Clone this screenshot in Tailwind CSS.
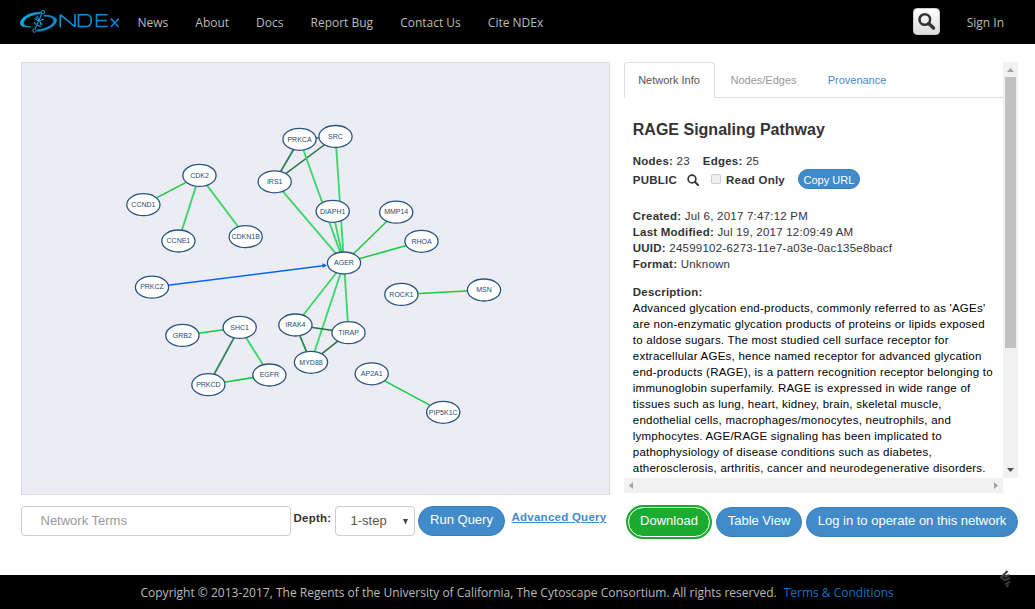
<!DOCTYPE html>
<html lang="en">
<head>
<meta charset="utf-8">
<title>NDEx - RAGE Signaling Pathway</title>
<script src="https://cdn.jsdelivr.net/npm/@tailwindcss/browser@4"></script>
</head>
<body class="bg-white text-[#333] text-xs leading-4 font-['Liberation_Sans',sans-serif] w-[1035px] h-[609px] overflow-hidden flex flex-col">
<header class="h-11 shrink-0 bg-black flex items-center pl-5 pr-[31px] text-[#bbb] font-['Open_Sans',sans-serif]">
  <svg class="w-[100px] h-7 mr-[17.5px] shrink-0" viewBox="20 8 100 28" fill="none">
    <defs><linearGradient id="lg" x1="20" y1="0" x2="120" y2="0" gradientUnits="userSpaceOnUse"><stop offset="0" stop-color="#12a5e0"/><stop offset="1" stop-color="#0a7fd0"/></linearGradient></defs>
    <g stroke="url(#lg)">
      <path d="M40.500 12.200C29 12.200 20.300 18 20.300 23.200C20.300 26.200 24 27.300 31 27C26 26.500 23.400 25.300 23.500 23C23.700 18.500 31 14.500 40.500 13.500Z" fill="#12a5e0" stroke-width=".7"/>
      <path d="M44 15.200C51 15.200 56.500 17.200 56.500 20.300C56.500 25.300 47.500 30.800 37.500 31.200V30C46 29 53.800 25 53.800 20.500C53.800 17.600 49.500 16.300 44 16.100Z" fill="#0e8dd2" stroke-width=".7"/>
      <path d="M41.500 14L40 18L38.500 21L37 25L35 28.500M34.500 18.500L38.500 21L44 19M36 24.500L34 22.500M37 25L41 26.500" stroke-width="1.100"/>
      <path d="M38 18.500L41 23.500" stroke-width="1.100"/>
      <circle cx="42.900" cy="12.200" r="1.800"/><circle cx="34.500" cy="30.600" r="1.700"/>
      <circle cx="37.200" cy="17.400" r=".9"/><circle cx="41.300" cy="24" r=".9"/>
      <path d="M60.300 27.200V15.300Q60.300 14.600 61.300 15.300L74 26Q75 26.800 75 26V14M78.500 14.800H86.500Q91.300 14.800 91.300 20.600Q91.300 26.500 86.500 26.500H78.500ZM107.700 14.800H96.500V26.500H107.700M96.500 20.500H107M110.800 18.600L118.700 27M118.700 18.600L110.800 27" stroke-width="1.600"/>
    </g>
  </svg>
  <nav class="flex gap-[27px] whitespace-nowrap pt-0.5">
    <a>News</a><a>About</a><a>Docs</a><a>Report Bug</a><a>Contact Us</a><a>Cite NDEx</a>
  </nav>
  <button class="ml-auto mr-[27px] -mt-0.5 size-[27px] rounded-[4px] bg-linear-to-b from-white to-[#dcdcdc] border border-[#ccc] flex items-center justify-center">
    <svg class="size-[19px]" viewBox="0 0 19 19" fill="none" stroke="#333"><circle cx="7.800" cy="7.500" r="5.300" stroke-width="2.500"/><path d="M11.700 11.500L16.500 16" stroke-width="3.400" stroke-linecap="round"/></svg>
  </button>
  <a class="whitespace-nowrap pt-0.5">Sign In</a>
</header>

<main class="flex-1 flex items-start pl-[21px] pt-[18px]">
  <section class="w-[589px] shrink-0">
    <div class="h-[433px] bg-[#ececf5] border border-[#ddd]">
      <svg id="network" class="block w-[587px] h-[431px]" viewBox="22 63 587 431"></svg>
    </div>
    <form class="mt-[11px] flex items-start whitespace-nowrap">
      <div class="w-[270px] h-[30px] shrink-0 border border-[#ccc] rounded-[4px] pl-[18.500px] text-[13px] leading-7 text-[#999]">Network Terms</div>
      <b class="w-[44px] shrink-0 pl-[2.500px] pt-1 text-[11.500px] tracking-[0.25px]">Depth:</b>
      <div class="w-[80px] h-[30px] shrink-0 border border-[#ccc] rounded-[4px] flex items-center justify-between pl-[14.500px] pr-[6px] text-[13px] text-[#555]">1-step
        <svg class="w-[5px] h-[6px] mt-0.5" viewBox="0 0 5 6"><path d="M0 0H5L2.500 5.500Z" fill="#444"/></svg></div>
      <button type="button" class="ml-[3px] w-[87px] h-[30px] shrink-0 rounded-full border border-[#357ebd] bg-[#428bca] text-white text-[13px] leading-[26px] pb-0.5">Run Query</button>
      <a class="ml-[6.500px] pt-[3px] font-bold text-[11.500px] tracking-[0.25px] text-[#428bca] underline">Advanced Query</a>
    </form>
  </section>

  <section class="ml-[14px] w-[394px] shrink-0">
    <div class="flex">
      <div class="w-[379px] h-[416px] overflow-hidden">
        <div class="flex h-9 text-[11px] leading-[34px] border-b border-[#ddd] text-center">
          <div class="w-[91px] h-9 border border-b-white border-[#ddd] rounded-t-[4px] bg-white text-[#555] pr-px">Network Info</div>
          <div class="w-[97px] pt-px text-[#999]">Nodes/Edges</div>
          <div class="w-[90px] pt-px text-[#428bca]">Provenance</div>
        </div>
        <div class="pl-[8.800px] whitespace-nowrap text-[11.500px] tracking-[0.23px]">
          <h1 class="mt-[22px] text-base leading-5 font-bold tracking-normal">RAGE Signaling Pathway</h1>
          <p class="mt-[13px]"><b>Nodes:</b> 23 <b class="ml-[9.500px]">Edges:</b> 25</p>
          <div class="flex items-center h-5 mt-px"><b>PUBLIC</b>
            <svg class="ml-[10px] size-3" viewBox="0 0 12 12" fill="none" stroke="#333"><circle cx="5" cy="5" r="3.900" stroke-width="1.600"/><path d="M8 8L11 11" stroke-width="2" stroke-linecap="round"/></svg>
            <span class="ml-[12.500px] size-[10px] rounded-[2px] border border-[#ccc] bg-[#f0f0f0] -mt-0.5"></span>
            <b class="ml-[4.500px]">Read Only</b>
            <button class="ml-[13px] -mt-0.5 w-[62px] h-5 rounded-full border border-[#357ebd] bg-[#428bca] text-white text-[11px] leading-4 tracking-normal pt-px">Copy URL</button>
          </div>
          <p class="mt-[18px]"><b>Created:</b> Jul 6, 2017 7:47:12 PM</p>
          <p><b>Last Modified:</b> Jul 19, 2017 12:09:49 AM</p>
          <p><b>UUID:</b> 24599102-6273-11e7-a03e-0ac135e8bacf</p>
          <p><b>Format:</b> Unknown</p>
          <p class="mt-3"><b>Description:</b></p>
          <p class="text-black">Advanced glycation end-products, commonly referred to as 'AGEs'<br>are non-enzymatic glycation products of proteins or lipids exposed<br>to aldose sugars. The most studied cell surface receptor for<br>extracellular AGEs, hence named receptor for advanced glycation<br>end-products (RAGE), is a pattern recognition receptor belonging to<br>immunoglobin superfamily. RAGE is expressed in wide range of<br>tissues such as lung, heart, kidney, brain, skeletal muscle,<br>endothelial cells, macrophages/monocytes, neutrophils, and<br>lymphocytes. AGE/RAGE signaling has been implicated to<br>pathophysiology of disease conditions such as diabetes,<br>atherosclerosis, arthritis, cancer and neurodegenerative disorders.</p>
        </div>
      </div>
      <div class="w-[15px] h-[416px] bg-[#f1f1f1] flex flex-col items-center justify-between">
        <div class="flex flex-col items-center">
          <svg class="w-[7px] h-[4px] mt-[6px] mb-[5px]" viewBox="0 0 7 4"><path d="M0 4H7L3.500 0Z" fill="#a3a3a3"/></svg>
          <div class="w-[11px] h-[271px] bg-[#c1c1c1]"></div>
        </div>
        <svg class="w-[7px] h-[4px] mb-[6px]" viewBox="0 0 7 4"><path d="M0 0H7L3.500 4Z" fill="#505050"/></svg>
      </div>
    </div>
    <div class="w-[379px] h-[15px] bg-[#f1f1f1] flex items-center justify-between px-[5px]">
      <svg class="w-[4px] h-[7px]" viewBox="0 0 4 7"><path d="M4 0V7L0 3.500Z" fill="#a3a3a3"/></svg>
      <svg class="w-[4px] h-[7px]" viewBox="0 0 4 7"><path d="M0 0V7L4 3.500Z" fill="#a3a3a3"/></svg>
    </div>
    <div class="mt-3 pl-0.5 flex items-center gap-1 text-[13px] text-white whitespace-nowrap">
      <div class="w-[86px] h-[34px] rounded-full bg-[#1aab2f] p-0.5"><button class="block w-full h-[30px] rounded-full border border-white leading-[26px] pb-0.5">Download</button></div>
      <button class="w-[86px] h-[30px] rounded-full border border-[#357ebd] bg-[#428bca] leading-[26px] pb-0.5">Table View</button>
      <button class="w-[212px] h-[30px] rounded-full border border-[#357ebd] bg-[#428bca] leading-[26px] pb-0.5">Log in to operate on this network</button>
    </div>
  </section>
</main>

<footer class="relative h-[34px] shrink-0 bg-black text-[#bbb] font-['Open_Sans',sans-serif] flex items-center pt-px pl-[140.500px] whitespace-nowrap">
  <span>Copyright © 2013-2017, The Regents of the University of California, The Cytoscape Consortium. All rights reserved.</span>
  <a class="ml-[7px] text-[#0f70c8]">Terms &amp; Conditions</a>
  <svg class="absolute left-[998px] -top-[5px] w-4 h-5" viewBox="0 0 16 20" fill="none" stroke="#3c3c3c" stroke-width="2"><path d="M9.500 1L3 7.500L5.500 9.500M6 7L11.500 5M5.500 10.500L12 8M7 14.500L12 11.500M8.500 17L10.500 14.500" /></svg>
</footer>

<script>
const nodes = {
  PRKCA:[299.5,139.3], SRC:[335.5,136.5], IRS1:[274.7,181.8], DIAPH1:[332.7,211.3], MMP14:[396.2,212.2],
  RHOA:[421.5,241.3], AGER:[344,263], CDK2:[199.5,175.4], CCND1:[143.4,204.7], CCNE1:[178.4,241],
  CDKN1B:[245.7,236.7], PRKCZ:[152,287.2], GRB2:[182.4,335.4], SHC1:[239.7,327.4], PRKCD:[208.4,384.7],
  EGFR:[269.4,375], IRAK4:[295.4,325], TIRAP:[348.5,332.7], MYD88:[311,362.3], AP2A1:[371.7,373.8],
  PIP5K1C:[443.2,412.3], ROCK1:[401.4,294.4], MSN:[484,290]
};
const green = '#10cf3c', light = '#35d866', dark = '#24743f', mid = '#2e8458';
const edges = [
  ['PRKCA','SRC',dark],['PRKCA','IRS1',mid],['SRC','IRS1',dark],['PRKCA','AGER',light],['SRC','AGER',light],
  ['IRS1','AGER',light],['DIAPH1','AGER',light],['MMP14','AGER',green],['RHOA','AGER',green],
  ['CDK2','CCND1',green],['CDK2','CCNE1',light],['CDK2','CDKN1B',light],['GRB2','SHC1',green],
  ['SHC1','PRKCD',mid],['SHC1','EGFR',light],['PRKCD','EGFR',green],['AGER','IRAK4',light],['AGER','MYD88',light],
  ['AGER','TIRAP',light],['IRAK4','TIRAP',dark],['IRAK4','MYD88',mid],['TIRAP','MYD88',dark],
  ['AP2A1','PIP5K1C',green],['ROCK1','MSN',green]
];
let out = '';
for (const [a, b, c] of edges) {
  const [x1, y1] = nodes[a], [x2, y2] = nodes[b];
  out += `<line x1="${x1}" y1="${y1}" x2="${x2}" y2="${y2}" stroke="${c}" stroke-width="${c === light || c === mid ? 1.8 : 1.5}"/>`;
}
out += '<line x1="152" y1="287.200" x2="325" y2="265.500" stroke="#0a62ff" stroke-width="1.500"/><path d="M327 265.200L322.300 263.200L322.800 267.900Z" fill="#0a62ff"/>';
for (const [name, [x, y]] of Object.entries(nodes)) {
  out += `<ellipse cx="${x}" cy="${y}" rx="16.600" ry="11" fill="#fff" stroke="#2b5382" stroke-width="1.300"/>`;
  out += `<text x="${x}" y="${y + 2.2}" text-anchor="middle" font-size="7" font-family="Liberation Sans, sans-serif" fill="#254a75">${name}</text>`;
}
document.getElementById('network').innerHTML = out;
</script>
</body>
</html>
